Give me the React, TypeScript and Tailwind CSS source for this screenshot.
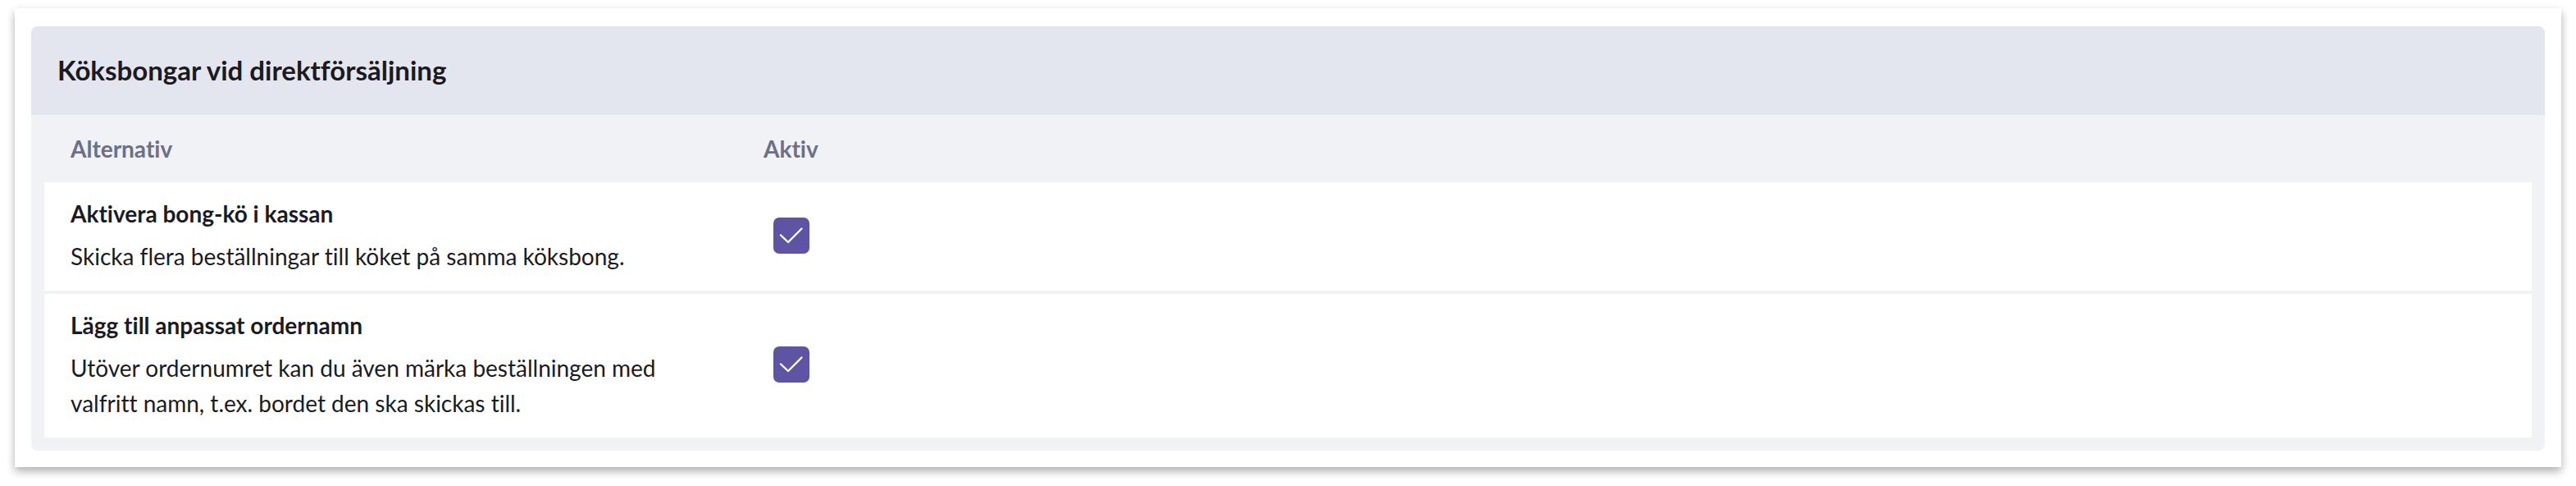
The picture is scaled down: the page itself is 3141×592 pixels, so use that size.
const rows = [
  {
    title: 'Aktivera bong-kö i kassan',
    desc: 'Skicka flera beställningar till köket på samma köksbong.',
  },
  {
    title: 'Lägg till anpassat ordernamn',
    desc: 'Utöver ordernumret kan du även märka beställningen med valfritt namn, t.ex. bordet den ska skickas till.',
  },
];

function CheckBox() {
  return (
    <div className="ml-[12px] w-[44px] h-[44px] rounded-[7px] bg-[#5f54a4] flex items-center justify-center">
      <svg width="44" height="44" viewBox="0 0 44 44" fill="none">
        <path d="M9 21.5 L18 30 L34.5 13.5" stroke="#ffffff" strokeWidth="2.4" strokeLinecap="round" strokeLinejoin="round" />
      </svg>
    </div>
  );
}

export default function App() {
  return (
    <div
      className="w-[3141px] h-[592px] bg-white pt-[10px] px-[18px] [font-variant-ligatures:none]"
      style={{ fontFamily: 'Lato, "Noto Sans", sans-serif' }}
    >
      <div className="bg-white shadow-[0_5px_10px_rgba(0,0,0,0.32)] pt-[22px] pb-[20px] px-[20px]">
        <div className="rounded-lg bg-[#f1f2f6] overflow-hidden pb-4">
          {/* Header */}
          <div className="h-[108px] bg-[#e4e6ef] px-8 flex items-center">
            <h1 className="text-[33px] font-bold text-[#1a1a1f]">Köksbongar vid direktförsäljning</h1>
          </div>

          {/* Column headers */}
          <div className="px-4">
            <div className="h-[82px] px-8 grid grid-cols-[845px_1fr] items-center text-[28px] font-bold text-[#6b6f87]">
              <div>Alternativ</div>
              <div>Aktiv</div>
            </div>

            <div className="flex flex-col gap-1">
              {rows.map((r) => (
                <div key={r.title} className="bg-white px-8 pt-[17px] pb-[20px] grid grid-cols-[845px_1fr] items-center">
                  <div className="pr-[80px]">
                    <div className="text-[28px] leading-[42px] font-bold text-[#1b1b1f] mb-[10px]">{r.title}</div>
                    <div className="text-[28px] leading-[43px] text-[#1b1b1f]">{r.desc}</div>
                  </div>
                  <div>
                    <CheckBox />
                  </div>
                </div>
              ))}
            </div>
          </div>
        </div>
      </div>
    </div>
  );
}
